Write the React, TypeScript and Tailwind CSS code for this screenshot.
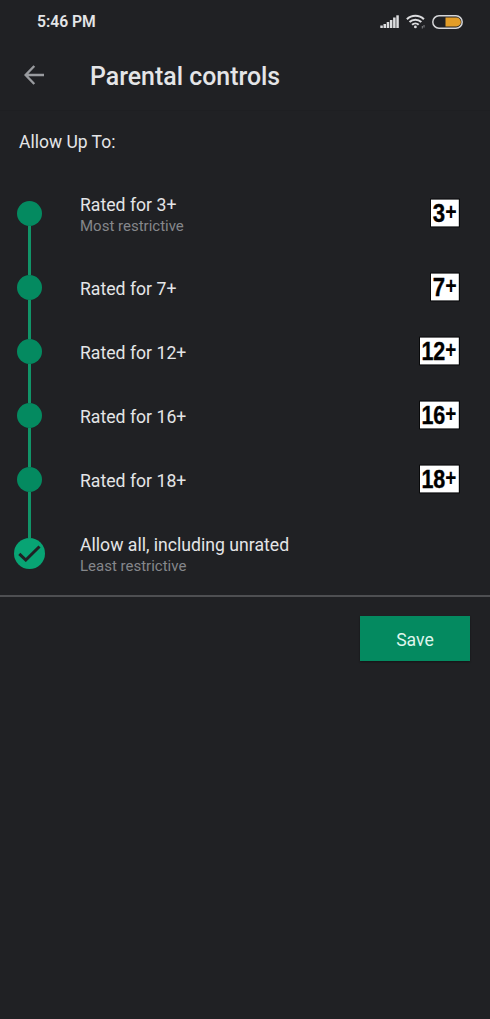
import { useState } from "react";
import clsx from "clsx";

type Rating = {
  label: string;
  hint?: string;
  badge?: string;
};

const ratings: Rating[] = [
  { label: "Rated for 3+", hint: "Most restrictive", badge: "3" },
  { label: "Rated for 7+", badge: "7" },
  { label: "Rated for 12+", badge: "12" },
  { label: "Rated for 16+", badge: "16" },
  { label: "Rated for 18+", badge: "18" },
  { label: "Allow all, including unrated", hint: "Least restrictive" },
];

function StatusIcons() {
  return (
    <div className="flex items-center gap-[7px]">
      <svg width="19" height="14" viewBox="0 0 19 14" fill="#dcdddf">
        <rect x="0.3" y="10.5" width="2.5" height="2.5" />
        <rect x="3.5" y="9" width="2.5" height="4" />
        <rect x="6.7" y="7" width="2.5" height="6" />
        <rect x="9.9" y="5" width="2.5" height="8" />
        <rect x="13.1" y="2.5" width="2.5" height="10.5" />
        <rect x="16.3" y="0.3" width="2.5" height="12.7" />
      </svg>
      <svg width="19" height="15" viewBox="0 0 19 15" fill="none" stroke="#dcdddf">
        <path d="M0.9 5.2a12.3 12.3 0 0 1 17 0" strokeWidth="2.1" />
        <path d="M3.5 8.1a8.4 8.4 0 0 1 11.8 0" strokeWidth="2.1" />
        <path d="M6.1 10.8a4.7 4.7 0 0 1 6.6 0" strokeWidth="2.1" />
        <circle cx="9.4" cy="12.9" r="1.4" fill="#dcdddf" stroke="none" />
        <path d="M16.3 12v2.5M18 11v2.5" strokeWidth="0.9" opacity="0.6" />
      </svg>
      <svg width="31" height="14" viewBox="0 0 31 14">
        <rect x="0.8" y="0.8" width="29.4" height="12.4" rx="6.2" fill="none" stroke="#d5d6d8" strokeWidth="1.5" />
        <path d="M13.5 2.6h11a4.4 4.4 0 0 1 0 8.8h-11z" fill="#e39d27" />
      </svg>
    </div>
  );
}

function Badge({ value }: { value: string }) {
  const wide = value.length > 1;
  const w = wide ? 41 : 30;
  return (
    <svg width={w} height="30" viewBox={`0 0 ${w} 30`} className="shrink-0">
      <rect y="0.5" width={w} height="29" rx="1" fill="#08090a" />
      <rect x="1" y="1.6" width={w - 2.2} height="26.8" fill="#fff" />
      <text
        x={wide ? 2.4 : 2.8}
        y="24.4"
        textLength={wide ? 35 : 23.8}
        lengthAdjust="spacingAndGlyphs"
        className="fill-black stroke-black stroke-[0.4] font-['Liberation_Sans',sans-serif] text-[26px] font-bold"
      >
        {value}
        <tspan dy="-2.2" className="stroke-none text-[23px]">
          +
        </tspan>
      </text>
    </svg>
  );
}

export default function App() {
  const [selected, setSelected] = useState(ratings.length - 1);

  return (
    <div className="flex min-h-screen flex-col bg-[#202124] font-[Roboto,sans-serif] text-[#e4e5e7]">
      <div className="flex h-[43px] items-center justify-between pl-[37px] pr-[27px]">
        <span className="text-[15.7px] leading-none font-semibold">5:46 PM</span>
        <StatusIcons />
      </div>

      <header className="flex h-[68px] items-center border-b border-[#1e1f22] pl-6">
        <button type="button" aria-label="Back" className="-mt-1">
          <svg width="20" height="20" viewBox="0 0 20 20" fill="none" stroke="#999b9f" strokeWidth="2.4">
            <path d="M20 10H1.8M10.3 1 1.6 10l8.7 9" />
          </svg>
        </button>
        <h1 className="ml-[46px] pt-[2px] text-[24.9px] leading-none font-medium">Parental controls</h1>
      </header>

      <p className="h-[60px] pt-[20px] pl-[19px] text-[17.5px] leading-[22px]">Allow Up To:</p>

      <ul>
        {ratings.map((item, i) => {
          const active = i === selected;
          return (
            <li
              key={item.label}
              onClick={() => setSelected(i)}
              className={clsx("flex cursor-pointer items-center pr-[30px] pl-[14px]", item.hint ? "h-[84px]" : "h-16")}
            >
              <div className="flex h-full w-[31px] flex-col items-center">
                <span className={clsx("w-[3px] flex-1", i > 0 && i <= selected && "bg-[#119468]")} />
                {active ? (
                  <span className="flex size-[31px] items-center justify-center rounded-full bg-[#08a474]">
                    <svg width="23" height="17" viewBox="0 0 23 17" fill="none" stroke="#202124" strokeWidth="3">
                      <path d="M1.3 8.8 7.8 15 21.5 1.5" />
                    </svg>
                  </span>
                ) : (
                  <span className="size-[25px] rounded-full bg-[#048a60]" />
                )}
                <span className={clsx("w-[3px] flex-1", i < selected && "bg-[#119468]")} />
              </div>
              <div className={clsx("ml-[35px] flex-1", item.hint ? "pt-[5px]" : "pt-[3px]")}>
                <div className="text-[17.65px] leading-[22px]">{item.label}</div>
                {item.hint && <div className="text-[15px] leading-[21px] text-[#85878b]">{item.hint}</div>}
              </div>
              {item.badge && <Badge value={item.badge} />}
            </li>
          );
        })}
      </ul>

      <div className="flex justify-end border-t-2 border-[#4e4f52] pt-[19px] pr-5">
        <button
          type="button"
          className="h-[45px] w-[110px] bg-[#048a60] pt-[3px] text-[17.6px] text-[#dff5ec] shadow-[0_1px_2px_rgba(0,0,0,0.4)]"
        >
          Save
        </button>
      </div>
    </div>
  );
}
